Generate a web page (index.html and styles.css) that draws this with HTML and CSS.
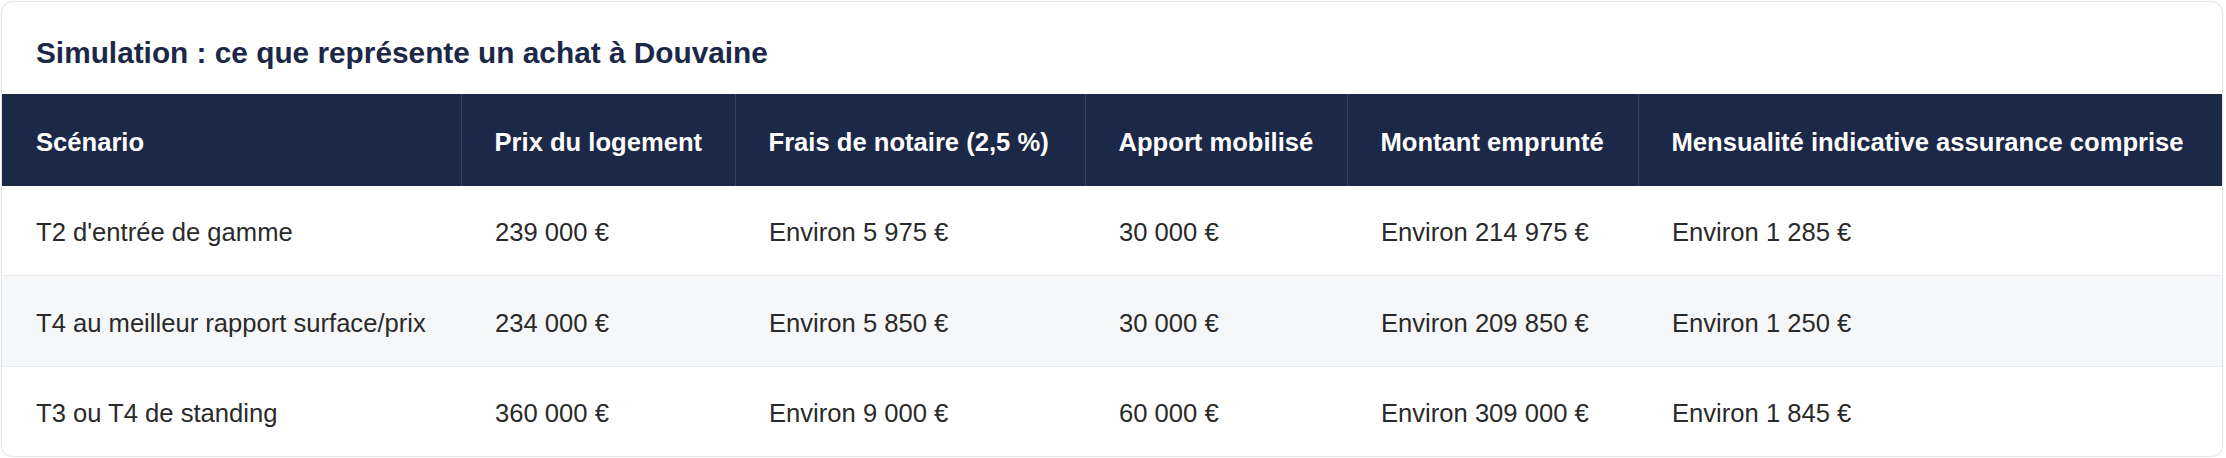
FILE: index.html
```html
<!DOCTYPE html>
<html lang="fr">
<head>
<meta charset="utf-8">
<title>Simulation : ce que représente un achat à Douvaine</title>
<link rel="stylesheet" href="styles.css">
</head>
<body>
<section class="card">
  <h2 class="card-title">Simulation : ce que représente un achat à Douvaine</h2>
  <table class="sim-table">
    <colgroup>
      <col class="c1"><col class="c2"><col class="c3"><col class="c4"><col class="c5"><col class="c6">
    </colgroup>
    <thead>
      <tr>
        <th>Scénario</th>
        <th>Prix du logement</th>
        <th>Frais de notaire (2,5 %)</th>
        <th>Apport mobilisé</th>
        <th>Montant emprunté</th>
        <th>Mensualité indicative assurance comprise</th>
      </tr>
    </thead>
    <tbody>
      <tr>
        <td>T2 d'entrée de gamme</td>
        <td>239 000 €</td>
        <td>Environ 5 975 €</td>
        <td>30 000 €</td>
        <td>Environ 214 975 €</td>
        <td>Environ 1 285 €</td>
      </tr>
      <tr class="alt">
        <td>T4 au meilleur rapport surface/prix</td>
        <td>234 000 €</td>
        <td>Environ 5 850 €</td>
        <td>30 000 €</td>
        <td>Environ 209 850 €</td>
        <td>Environ 1 250 €</td>
      </tr>
      <tr>
        <td>T3 ou T4 de standing</td>
        <td>360 000 €</td>
        <td>Environ 9 000 €</td>
        <td>60 000 €</td>
        <td>Environ 309 000 €</td>
        <td>Environ 1 845 €</td>
      </tr>
    </tbody>
  </table>
</section>
</body>
</html>
```

FILE: styles.css
```css
html, body {
  margin: 0;
  background: #ffffff;
}

body {
  padding: 1px 3px 0 1px;
  font-family: "Liberation Sans", Arial, Helvetica, sans-serif;
  color: #2a2a2a;
}

.card {
  width: 2222px;
  box-sizing: border-box;
  border: 1px solid #e3e6ea;
  border-radius: 12px;
  overflow: hidden;
  background: #ffffff;
  box-shadow: 0 1px 3px rgba(15, 23, 42, 0.07);
}

.card-title {
  margin: 0;
  padding: 34px 34px 24px;
  font-size: 29.8px;
  font-weight: 700;
  line-height: normal;
  color: #1c2847;
}

.sim-table {
  width: 100%;
  border-collapse: collapse;
  table-layout: fixed;
  font-size: 25.6px;
  line-height: normal;
}

.c1 { width: 459px; }
.c2 { width: 274px; }
.c3 { width: 350px; }
.c4 { width: 262px; }
.c5 { width: 291px; }
.c6 { width: auto; }

.sim-table th {
  background: #1c2847;
  color: #ffffff;
  font-weight: 700;
  text-align: left;
  padding: 34px 34px 28.6px;
  white-space: nowrap;
}

.sim-table th + th {
  border-left: 1px solid #33405c;
  padding-left: 33px;
}

.sim-table td {
  padding: 32.5px 34px 28px;
  white-space: nowrap;
  color: #2a2a2a;
}

.sim-table tbody tr {
  border-bottom: 1px solid #e8eaee;
}

.sim-table tbody tr:last-child {
  border-bottom: none;
}

.sim-table tr.alt td {
  background: #f6f7f9;
}
```
